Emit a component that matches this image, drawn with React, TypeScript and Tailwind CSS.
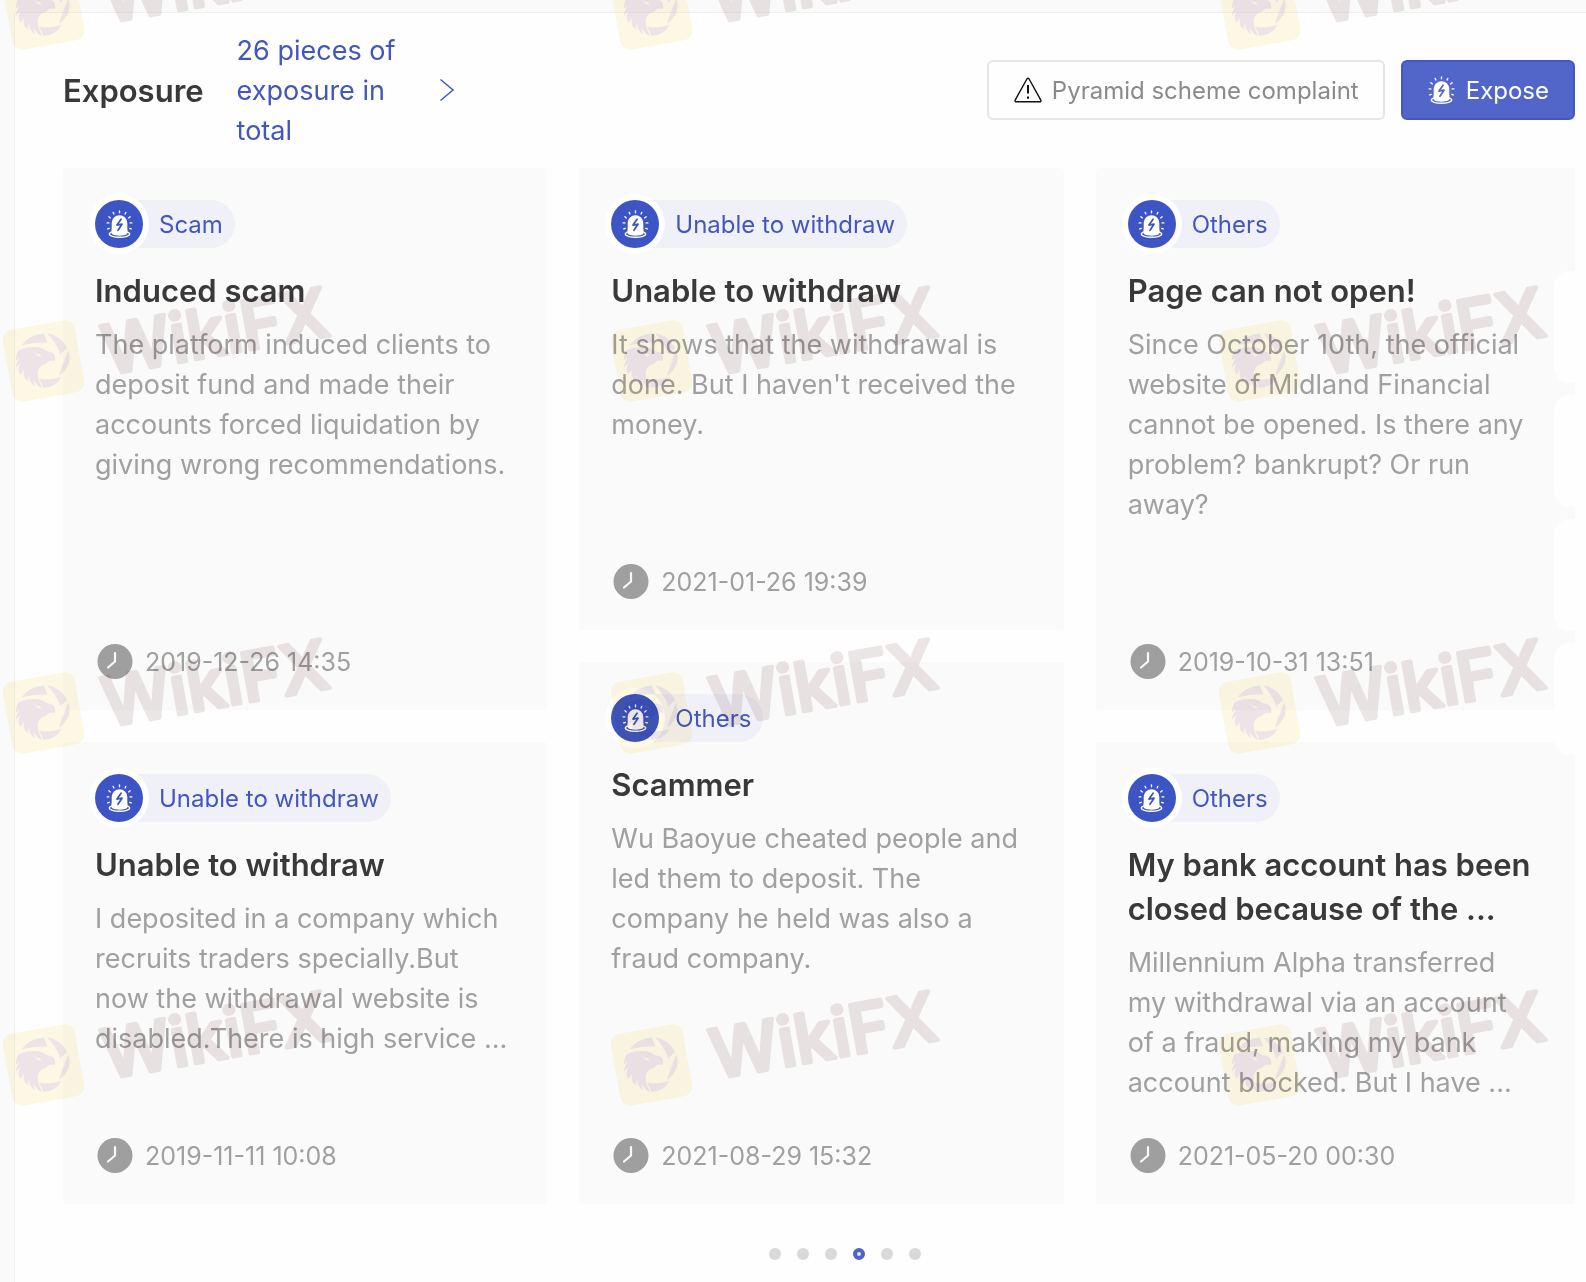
import React from "react";

function Siren({ className = "", bolt }: { className?: string; bolt: string }) {
  return (
    <svg viewBox="0 0 28 29" className={className} fill="none" aria-hidden="true">
      <g stroke="currentColor" strokeWidth="1.4" strokeLinecap="round">
        <path d="M14 .9v2M7.4 2.4l.8 1.7M20.6 2.4l-.8 1.700M3 7l1.500 1.200M25 7l-1.500 1.200M1.200 13.400H3M26.800 13.400H25M1.800 19.600l1.600-.6M26.200 19.600l-1.600-.6" />
      </g>
      <path d="M5.900 24.600V13.400a8.100 8.100 0 0 1 16.200 0v11.200z" fill="currentColor" />
      <ellipse cx="14" cy="24.900" rx="10.600" ry="3.300" fill={bolt} stroke="currentColor" strokeWidth="1.400" />
      <path d="M5.900 20v4.600c1.800 1.500 4.700 2 8.100 2s6.300-.5 8.100-2V20z" fill="currentColor" />
      <path d="M15.600 9.600l-4.200 6 5.200-.9-4.200 6.300" stroke={bolt} strokeWidth="1.800" strokeLinejoin="round" strokeLinecap="round" />
    </svg>
  );
}

function Clock() {
  return (
    <svg viewBox="0 0 36 36" className="size-9" fill="none" aria-hidden="true">
      <circle cx="18" cy="17.500" r="17.500" fill="#9f9f9f" />
      <path d="M18 9V17.500l-7 6" stroke="#fafafa" strokeWidth="2.200" strokeLinecap="round" strokeLinejoin="round" />
    </svg>
  );
}

type Item = { tag: string; title: string; body: string; date: string; size: "tall" | "short" };

const columns: Item[][] = [
  [
    {
      tag: "Scam",
      title: "Induced scam",
      body: "The platform induced clients to\ndeposit fund and made their\naccounts forced liquidation by\ngiving wrong recommendations.",
      date: "2019-12-26 14:35",
      size: "tall",
    },
    {
      tag: "Unable to withdraw",
      title: "Unable to withdraw",
      body: "I deposited in a company which\nrecruits traders specially.But\nnow the withdrawal website is\ndisabled.There is high service ...",
      date: "2019-11-11 10:08",
      size: "short",
    },
  ],
  [
    {
      tag: "Unable to withdraw",
      title: "Unable to withdraw",
      body: "It shows that the withdrawal is\ndone. But I haven't received the\nmoney.",
      date: "2021-01-26 19:39",
      size: "short",
    },
    {
      tag: "Others",
      title: "Scammer",
      body: "Wu Baoyue cheated people and\nled them to deposit. The\ncompany he held was also a\nfraud company.",
      date: "2021-08-29 15:32",
      size: "tall",
    },
  ],
  [
    {
      tag: "Others",
      title: "Page can not open!",
      body: "Since October 10th, the official\nwebsite of Midland Financial\ncannot be opened. Is there any\nproblem? bankrupt? Or run\naway?",
      date: "2019-10-31 13:51",
      size: "tall",
    },
    {
      tag: "Others",
      title: "My bank account has been\nclosed because of the ...",
      body: "Millennium Alpha transferred\nmy withdrawal via an account\nof a fraud, making my bank\naccount blocked. But I have ...",
      date: "2021-05-20 00:30",
      size: "short",
    },
  ],
];

function Card({ item }: { item: Item }) {
  return (
    <article
      className={
        (item.size === "tall" ? "min-h-[542px]" : "min-h-[462px]") +
        " flex flex-col whitespace-pre rounded bg-[#fafafa] px-8 pt-8 pb-[30px]"
      }
    >
      <div className="flex h-12 w-fit items-center rounded-full bg-[#f0f1f8] pr-3 text-2xl text-[#4257be]">
        <span className="flex size-12 items-center justify-center rounded-full bg-[#3d54c5] text-white ring-6 ring-white">
          <Siren className="h-7 w-[27px]" bolt="#3d54c5" />
        </span>
        <span className="pt-0.5 pl-4">{item.tag}</span>
      </div>
      <h2 className="mt-[21px] text-[31px] leading-[44px] font-semibold text-[#393939]">{item.title}</h2>
      <p className="mt-3 text-[27px] leading-10 text-[#a0a0a0]">{item.body}</p>
      <div className="mt-auto flex items-center gap-3 pl-0.5 text-[25px] leading-9 text-[#a0a0a0]">
        <Clock />
        <time>{item.date}</time>
      </div>
    </article>
  );
}

function Watermark() {
  return (
    <svg viewBox="0 0 340 120" className="h-[120px] w-[340px] shrink-0 overflow-visible" aria-hidden="true">
      <rect x="-36.5" y="-36.5" width="73" height="73" rx="10" fill="#fef9e5" transform="translate(43.5 84) rotate(-10)" />
      <g transform="translate(-3.500 24.700) scale(.3333)" fill="#ede6e8">
        <path d="M75 131Q98 99 143 95L152 122Q112 122 75 131Z" />
        <path d="M152 95Q192 101 212 139L191 158Q182 126 152 95Z" />
        <path d="M215 146Q230 187 193 219Q186 222 190 212Z" />
        <path d="M196 226Q176 258 141 258L127 231Q160 237 196 226Z" />
        <path
          fillRule="evenodd"
          d="M66 146Q104 130 138 140Q150 151 162 150Q180 156 175 178Q160 172 148 186Q120 194 124 222Q126 242 138 259Q122 256 112 234Q112 250 118 254Q98 246 98 222Q92 232 94 240Q78 228 82 206Q74 214 72 220Q60 204 72 186Q60 192 60 200Q56 186 70 168Q60 172 58 178Q58 158 66 146ZM114 153L136 161Q128 168 122 160Z"
        />
      </g>
      <text
        transform="translate(107 98) rotate(-10)"
        fontFamily="Inter"
        fontWeight="500"
        fontSize="68"
        fill="#ede6e6"
        stroke="#ede6e6"
        strokeWidth="4"
        strokeLinejoin="round"
      >
        WikiFX
      </text>
    </svg>
  );
}

export default function App() {
  return (
    <main className="relative min-h-[1282px] overflow-hidden bg-[#fafafa] pt-3 pl-3.5 font-['Inter',sans-serif]">
      <section className="min-h-[1270px] border-t border-l border-[#f0f0f0] bg-[#fefefe] pr-[11px] pl-12">
        <header className="mb-px flex h-[154px] items-center">
          <h1 className="pt-0.5 text-[31px] font-semibold text-[#393939]">Exposure</h1>
          <a href="#all" className="ml-[33px] flex items-center text-[27px] leading-10 text-[#4257be]">
            <span className="w-[202px] pt-0.5 pr-8">26 pieces of exposure in total</span>
            <svg viewBox="0 0 16 24" className="h-6 w-4" fill="none" stroke="currentColor" strokeWidth="1.500" aria-hidden="true">
              <path d="M1.500 1.500L14 12L1.500 22.500" />
            </svg>
          </a>
          <div className="ml-auto flex gap-4 text-2xl">
            <button className="flex h-[60px] items-center gap-2.5 rounded-md border-2 border-[#e6e6e6] pr-6 pl-[25px] text-[#8a8a8a]">
              <svg viewBox="0 0 28 26" className="h-[26px] w-7" fill="none" stroke="#111" aria-hidden="true">
                <path d="M12.900 2Q14 .3 15.100 2L26.700 22.800Q27.500 24.800 25.600 24.800H2.400Q.5 24.800 1.300 22.800Z" strokeWidth="1.400" />
                <path d="M14 8v8.500M14 19.500v2.200" strokeWidth="2" />
              </svg>
              <span className="pt-0.5">Pyramid scheme complaint</span>
            </button>
            <button className="flex h-[60px] items-center gap-[11px] rounded-md border-2 border-[#4358c2] bg-[#5266ca] pr-6 pl-[25px] text-white">
              <Siren className="h-7 w-[27px]" bolt="#5266ca" />
              <span className="pt-0.5">Expose</span>
            </button>
          </div>
        </header>
        <div className="grid grid-cols-[484fr_484fr_479fr] gap-8">
          {columns.map((col, i) => (
            <div key={i} className="flex min-w-0 flex-col gap-8">
              {col.map((item) => (
                <Card key={item.date} item={item} />
              ))}
            </div>
          ))}
        </div>
        <nav className="mt-11 flex justify-center gap-4 pl-[52px]" aria-label="Pages">
          {[0, 1, 2, 3, 4, 5].map((n) => (
            <button
              key={n}
              aria-label={"Page " + (n + 1)}
              className={n === 3 ? "size-3 rounded-full border-4 border-[#4f62c6] bg-[#dfe3f8]" : "size-3 rounded-full bg-[#d9d9d9]"}
            />
          ))}
        </nav>
      </section>
      <div className="absolute top-[271px] right-0 flex w-8 flex-col gap-3">
        {[0, 1, 2, 3].map((n) => (
          <div key={n} className="h-28 rounded-l-2xl bg-[#fefefe]" />
        ))}
      </div>
      <div className="pointer-events-none absolute top-[-75px] left-0 grid grid-cols-[repeat(3,608px)] gap-y-[232px] mix-blend-multiply">
        {Array.from({ length: 12 }, (_, n) => (
          <Watermark key={n} />
        ))}
      </div>
    </main>
  );
}
